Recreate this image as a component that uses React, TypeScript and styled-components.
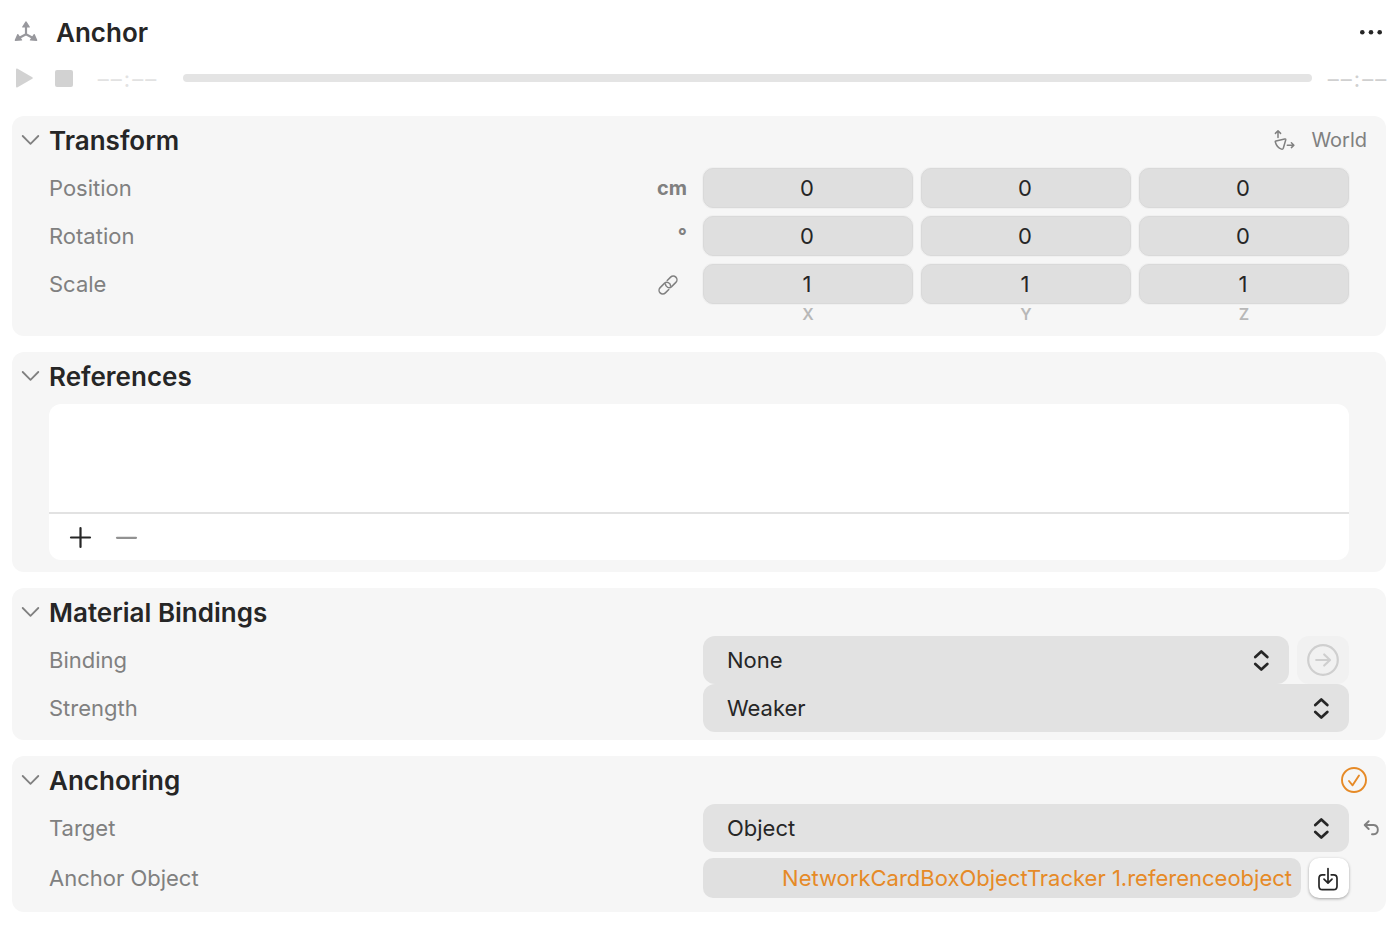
import React, { useState } from 'react';
import styled, { createGlobalStyle } from 'styled-components';

const GlobalStyle = createGlobalStyle`
  *, *::before, *::after { box-sizing: border-box; }
  body {
    margin: 0;
    background: #ffffff;
    color: #262626;
    font-family: Inter, "Liberation Sans", sans-serif;
    font-size: 22px;
    line-height: 28px;
  }
  button, input, select { font: inherit; color: inherit; margin: 0; }
  svg { display: block; flex: none; }
`;

const Inspector = styled.main`
  padding: 8px 5px 16px 12px;
`;

const TitleBar = styled.header`
  display: flex;
  align-items: center;
  height: 48px;
  padding: 0 3px 0 2px;
`;

const EntityName = styled.h1`
  flex: 1;
  margin: 0 0 0 18px;
  padding-top: 2px;
  font-size: 26px;
  line-height: 32px;
  font-weight: 600;
`;

const IconButton = styled.button<{ $tint?: string }>`
  display: flex;
  align-items: center;
  justify-content: center;
  padding: 0;
  border: 0;
  background: none;
  color: ${(p) => p.$tint ?? '#262626'};
`;

const Transport = styled.div`
  display: flex;
  align-items: center;
  height: 44px;
  padding-left: 3px;
`;

const TransportButtons = styled.div`
  display: flex;
  gap: 20px;
`;

const TimeText = styled.span<{ $tint: string }>`
  display: flex;
  justify-content: center;
  gap: 2px;
  width: 64px;
  padding-top: 2px;
  font-size: 22px;
  font-weight: 400;
  color: ${(p) => p.$tint};
`;

const Scrubber = styled.input`
  flex: 1;
  min-width: 0;
  height: 8px;
  margin: 0 13px 0 24px;
  appearance: none;
  border-radius: 4px;
  background: #e4e4e4;
  &::-webkit-slider-thumb { appearance: none; width: 8px; height: 8px; }
`;

const TransportStart = styled.div`
  display: flex;
  align-items: center;
  gap: 20px;
`;

const TransportEnd = styled.div`
  margin-right: -3px;
`;

const Sections = styled.div`
  display: flex;
  flex-direction: column;
  gap: 16px;
  margin-top: 16px;
`;

const Panel = styled.section<{ $bottom: number }>`
  padding-bottom: ${(p) => p.$bottom}px;
  border-radius: 12px;
  background: #f6f6f6;
`;

const PanelHeader = styled.div`
  display: flex;
  align-items: center;
  height: 48px;
  padding: 0 19px 0 9px;
`;

const PanelTitle = styled.h2`
  flex: 1;
  margin: 0 0 0 8px;
  padding-top: 2px;
  font-size: 26px;
  line-height: 32px;
  font-weight: 600;
`;

const SpaceButton = styled(IconButton)`
  gap: 16px;
  font-size: 20px;
`;

const Rows = styled.div<{ $gap?: number; $top?: number }>`
  display: flex;
  flex-direction: column;
  gap: ${(p) => p.$gap ?? 0}px;
  padding-top: ${(p) => p.$top ?? 0}px;
`;

const RowLine = styled.div`
  display: flex;
  padding-left: 37px;
`;

const RowGrid = styled.div`
  flex: 1;
  display: grid;
  grid-template-columns: minmax(0, 1fr) minmax(0, 1fr);
  column-gap: 8px;
  align-items: center;
`;

const Gutter = styled.div`
  display: flex;
  align-items: center;
  width: 37px;
  padding-left: 14px;
`;

const LabelCell = styled.div`
  display: flex;
  align-items: center;
  justify-content: space-between;
  padding-right: 8px;
  color: #808080;
`;

const Unit = styled.span`
  font-size: 20px;
  font-weight: 700;
`;

const LinkButton = styled(IconButton)`
  padding: 2px 9px 0 0;
`;

const Triple = styled.div`
  display: grid;
  grid-template-columns: repeat(3, minmax(0, 1fr));
  gap: 8px;
`;

const NumberField = styled.input`
  width: 100%;
  height: 40px;
  padding: 0 2px 0 0;
  border: 1px solid #d9d9d9;
  border-radius: 10px;
  background: #dfdfdf;
  box-shadow: 0 0 0 1px #f0f0f0;
  text-align: center;
`;

const Axis = styled.span`
  text-align: center;
  font-size: 16px;
  line-height: 20px;
  font-weight: 600;
  color: #b8b8b8;
`;

const ReferenceList = styled.div`
  margin: 4px 37px 0;
  border-radius: 12px;
  background: #ffffff;
`;

const ReferenceItems = styled.div`
  height: 110px;
  border-bottom: 2px solid #e2e2e2;
`;

const ReferenceActions = styled.div`
  display: flex;
  align-items: center;
  gap: 22px;
  height: 46px;
  padding: 2px 20px 0;
`;

const Controls = styled.div`
  display: flex;
  gap: 8px;
`;

const SelectBox = styled.div`
  position: relative;
  flex: 1;
  min-width: 0;
  svg {
    position: absolute;
    top: 13px;
    right: 20px;
    pointer-events: none;
  }
`;

const Select = styled.select`
  width: 100%;
  height: 48px;
  padding: 0 48px 0 24px;
  appearance: none;
  border: 0;
  border-radius: 12px;
  background: #e2e2e2;
`;

const GoButton = styled(IconButton)`
  width: 52px;
  height: 48px;
  border-radius: 12px;
  background: #f1f1f1;
`;

const ObjectField = styled.input`
  flex: 1;
  min-width: 0;
  height: 40px;
  padding: 0 9px;
  border: 0;
  border-radius: 10px;
  background: #e0e0e0;
  color: #e68a27;
  text-align: right;
`;

const ImportButton = styled(IconButton)`
  width: 40px;
  height: 40px;
  padding: 2px 2px 0 0;
  border-radius: 10px;
  background: #ffffff;
  box-shadow: 0 1px 3px rgba(0, 0, 0, 0.35);
`;

const line = {
  fill: 'none',
  stroke: 'currentColor',
  strokeLinecap: 'round' as const,
  strokeLinejoin: 'round' as const,
  'aria-hidden': true,
};

const AxesIcon = () => (
  <svg width="24" height="22" viewBox="0 0 24 22" aria-hidden="true">
    <path d="M12 5v8.200M12 13.200l-7 3.800M12 13.200l7 3.800" fill="none" stroke="#98989d" strokeWidth="2.200" />
    <path
      d="M12 .9l3.300 5.100h-6.600zM1.300 19.300l2.500-5.800 3.800 5.500zM22.700 19.300l-2.500-5.800-3.800 5.500z"
      fill="#98989d"
      stroke="#98989d"
      strokeWidth="1.200"
      strokeLinejoin="round"
    />
  </svg>
);

const MoreIcon = () => (
  <svg width="24" height="6" viewBox="0 0 24 6" fill="currentColor" aria-hidden="true">
    <circle cx="3.300" cy="3.300" r="2.300" />
    <circle cx="12" cy="3.300" r="2.300" />
    <circle cx="20.700" cy="3.300" r="2.300" />
  </svg>
);

const PlayIcon = () => (
  <svg width="20" height="20" viewBox="0 0 20 20" fill="#d2d2d2" aria-hidden="true">
    <path d="M1 1.800Q1 0 2.600.8L17.300 9.200Q18.600 10 17.300 10.800L2.600 19.200Q1 20 1 18.200z" />
  </svg>
);

const StopIcon = () => (
  <svg width="20" height="20" viewBox="0 0 20 20" fill="#d2d2d2" aria-hidden="true">
    <rect x="0" y="2" width="18" height="17" rx="2" />
  </svg>
);

const DisclosureIcon = () => (
  <svg width="20" height="12" viewBox="0 0 20 12" {...line} strokeWidth="1.800">
    <path d="M1.700 2l7.800 7.800L17.300 2" />
  </svg>
);

const SpaceIcon = () => (
  <svg width="22" height="22" viewBox="0 0 22 22" {...line} strokeWidth="1.500">
    <path d="M5 8.500V2M2.400 4.400L5 1.800l2.600 2.600M14.300 16.200h6.500M18.400 13.800l2.500 2.400-2.500 2.400" />
    <path d="M2.400 13.200Q1.900 12.200 3 11.900L11.700 10Q13 9.800 12.700 11L10.300 19.200Q9.800 20.500 8.500 20.100Q3.800 18.500 2.400 13.200z" />
  </svg>
);

const LinkIcon = () => (
  <svg width="20" height="20" viewBox="0 0 20 20" {...line} strokeWidth="1.500">
    <g transform="translate(10 10) rotate(-45)">
      <path d="M-2.600 3.700H-7.400A3.700 3.700 0 0 1 -7.400 -3.700H-1.400A3.700 3.700 0 0 1 1.200 2.500" />
      <path d="M2.600 -3.700H7.400A3.700 3.700 0 0 1 7.400 3.700H1.400A3.700 3.700 0 0 1 -1.200 -2.500" />
    </g>
  </svg>
);

const PlusIcon = () => (
  <svg width="24" height="24" viewBox="0 0 24 24" {...line} strokeWidth="2.200">
    <path d="M11.500 2v19M2 11.500h19" />
  </svg>
);

const MinusIcon = () => (
  <svg width="24" height="24" viewBox="0 0 24 24" {...line} strokeWidth="2.200">
    <path d="M2 11.800h19" />
  </svg>
);

const UpDownIcon = () => (
  <svg width="16" height="22" viewBox="0 0 16 22" {...line} strokeWidth="2.700">
    <path d="M2.300 8L8.300 2.500l6 5.500M2.300 15L8.300 20.500l6-5.500" />
  </svg>
);

const GoIcon = () => (
  <svg width="32" height="32" viewBox="0 0 32 32" {...line} strokeWidth="2.200">
    <circle cx="16" cy="16" r="14.800" />
    <path d="M9.200 16h13.500M17.200 10.500l5.800 5.500-5.800 5.500" />
  </svg>
);

const CheckIcon = () => (
  <svg width="26" height="26" viewBox="0 0 26 26" {...line} stroke="#e68a27" strokeWidth="1.900">
    <circle cx="13" cy="13" r="12" />
    <path d="M8 14l3.600 4.300L18 8.500" />
  </svg>
);

const UndoIcon = () => (
  <svg width="18" height="18" viewBox="0 0 18 18" {...line} strokeWidth="1.900">
    <path d="M5.700 2.200L1.700 6l4 4M2 6H10.800a4.700 4.700 0 0 1 0 9.300H9" />
  </svg>
);

const ImportIcon = () => (
  <svg width="22" height="26" viewBox="0 0 22 26" {...line} strokeWidth="1.700">
    <path d="M7.800 8.800H5.400Q2 8.800 2 12.200V20.300Q2 23.700 5.400 23.700H16.600Q20 23.700 20 20.300V12.200Q20 8.800 16.600 8.800H14.200" />
    <path d="M11 2.500V17M7 13.200l4 4 4-4" />
  </svg>
);

const TimeReadout = ({ tint }: { tint: string }) => (
  <TimeText $tint={tint}>
    {Array.from('––:––').map((glyph, i) => (
      <span key={i}>{glyph}</span>
    ))}
  </TimeText>
);

interface RowProps {
  label: string;
  htmlFor: string;
  unit?: React.ReactNode;
  trailing?: React.ReactNode;
  children: React.ReactNode;
}

const Row = ({ label, htmlFor, unit, trailing, children }: RowProps) => (
  <RowLine>
    <RowGrid>
      <LabelCell>
        <label htmlFor={htmlFor}>{label}</label>
        {unit}
      </LabelCell>
      {children}
    </RowGrid>
    <Gutter>{trailing}</Gutter>
  </RowLine>
);

const VectorFields = ({ name, id, initial }: { name: string; id: string; initial: string }) => {
  const [values, setValues] = useState([initial, initial, initial]);
  return (
    <Triple>
      {['X', 'Y', 'Z'].map((axis, i) => (
        <NumberField
          key={axis}
          id={i === 0 ? id : undefined}
          aria-label={`${name} ${axis}`}
          inputMode="decimal"
          value={values[i]}
          onChange={(e) => setValues(values.map((v, n) => (n === i ? e.target.value : v)))}
        />
      ))}
    </Triple>
  );
};

const PopUp = ({ id, options }: { id: string; options: string[] }) => (
  <SelectBox>
    <Select id={id} defaultValue={options[0]}>
      {options.map((o) => (
        <option key={o}>{o}</option>
      ))}
    </Select>
    <UpDownIcon />
  </SelectBox>
);

interface SectionProps {
  title: string;
  bottom: number;
  accessory?: React.ReactNode;
  children: React.ReactNode;
}

const Section = ({ title, bottom, accessory, children }: SectionProps) => {
  const [open, setOpen] = useState(true);
  return (
    <Panel $bottom={open ? bottom : 0}>
      <PanelHeader>
        <IconButton
          type="button"
          $tint="#808080"
          aria-label={`Toggle ${title}`}
          aria-expanded={open}
          onClick={() => setOpen(!open)}
        >
          <DisclosureIcon />
        </IconButton>
        <PanelTitle>{title}</PanelTitle>
        {accessory}
      </PanelHeader>
      {open && children}
    </Panel>
  );
};

export default function App() {
  return (
    <>
      <GlobalStyle />
      <Inspector>
        <TitleBar>
          <AxesIcon />
          <EntityName>Anchor</EntityName>
          <IconButton type="button" aria-label="More">
            <MoreIcon />
          </IconButton>
        </TitleBar>
        <Transport>
          <TransportStart>
            <TransportButtons>
              <IconButton type="button" aria-label="Play" disabled>
                <PlayIcon />
              </IconButton>
              <IconButton type="button" aria-label="Stop" disabled>
                <StopIcon />
              </IconButton>
            </TransportButtons>
            <TimeReadout tint="#e2e2e2" />
          </TransportStart>
          <Scrubber type="range" aria-label="Timeline" defaultValue={0} disabled />
          <TransportEnd>
            <TimeReadout tint="#d0d0d0" />
          </TransportEnd>
        </Transport>

        <Sections>
          <Section
            title="Transform"
            bottom={12}
            accessory={
              <SpaceButton type="button" $tint="#808080">
                <SpaceIcon />
                World
              </SpaceButton>
            }
          >
            <Rows $gap={8} $top={4}>
              <Row label="Position" htmlFor="position" unit={<Unit>cm</Unit>}>
                <VectorFields name="Position" id="position" initial="0" />
              </Row>
              <Row label="Rotation" htmlFor="rotation" unit={<Unit>°</Unit>}>
                <VectorFields name="Rotation" id="rotation" initial="0" />
              </Row>
              <Row
                label="Scale"
                htmlFor="scale"
                unit={
                  <LinkButton type="button" $tint="#808080" aria-label="Link scale axes">
                    <LinkIcon />
                  </LinkButton>
                }
              >
                <VectorFields name="Scale" id="scale" initial="1" />
              </Row>
            </Rows>
            <RowLine>
              <RowGrid>
                <span />
                <Triple>
                  <Axis>X</Axis>
                  <Axis>Y</Axis>
                  <Axis>Z</Axis>
                </Triple>
              </RowGrid>
              <Gutter />
            </RowLine>
          </Section>

          <Section title="References" bottom={12}>
            <ReferenceList>
              <ReferenceItems />
              <ReferenceActions>
                <IconButton type="button" aria-label="Add reference">
                  <PlusIcon />
                </IconButton>
                <IconButton type="button" $tint="#929292" aria-label="Remove reference" disabled>
                  <MinusIcon />
                </IconButton>
              </ReferenceActions>
            </ReferenceList>
          </Section>

          <Section title="Material Bindings" bottom={8}>
            <Rows>
              <Row label="Binding" htmlFor="binding">
                <Controls>
                  <PopUp id="binding" options={['None']} />
                  <GoButton type="button" $tint="#cfcfcf" aria-label="Go to material" disabled>
                    <GoIcon />
                  </GoButton>
                </Controls>
              </Row>
              <Row label="Strength" htmlFor="strength">
                <PopUp id="strength" options={['Weaker', 'Stronger']} />
              </Row>
            </Rows>
          </Section>

          <Section title="Anchoring" bottom={14} accessory={<CheckIcon />}>
            <Rows $gap={6}>
              <Row
                label="Target"
                htmlFor="target"
                trailing={
                  <IconButton type="button" $tint="#808080" aria-label="Revert target">
                    <UndoIcon />
                  </IconButton>
                }
              >
                <PopUp id="target" options={['Object']} />
              </Row>
              <Row label="Anchor Object" htmlFor="anchor-object">
                <Controls>
                  <ObjectField
                    id="anchor-object"
                    readOnly
                    value="NetworkCardBoxObjectTracker 1.referenceobject"
                  />
                  <ImportButton type="button" aria-label="Choose anchor object">
                    <ImportIcon />
                  </ImportButton>
                </Controls>
              </Row>
            </Rows>
          </Section>
        </Sections>
      </Inspector>
    </>
  );
}
